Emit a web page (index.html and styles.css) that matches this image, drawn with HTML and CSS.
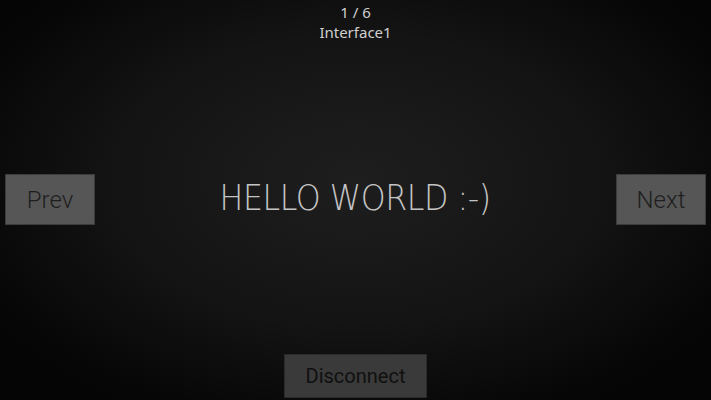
FILE: index.html
```html
<!DOCTYPE html>
<html>
<head>
<meta charset="utf-8">
<link rel="stylesheet" href="styles.css">
</head>
<body>
<div class="screen">
  <header class="header">
    <div class="counter">1 / 6</div>
    <div class="title">Interface1</div>
  </header>
  <main class="middle">
    <button class="btn side">Prev</button>
    <div class="message">HELLO WORLD :-)</div>
    <button class="btn side">Next</button>
  </main>
  <footer class="footer">
    <button class="btn disconnect">Disconnect</button>
  </footer>
</div>
</body>
</html>
```
FILE: styles.css
```css
html, body {
  margin: 0;
  padding: 0;
  background: #000;
}
.screen {
  width: 711px;
  height: 400px;
  display: flex;
  flex-direction: column;
  background: radial-gradient(ellipse 60% 65% at 50% 45%, #1e1e1e 0%, #141414 55%, #050505 100%);
  font-family: "Noto Sans", "DejaVu Sans", sans-serif;
}
.header {
  height: 44px;
  display: flex;
  flex-direction: column;
  align-items: center;
  padding-top: 2px;
  box-sizing: border-box;
  color: #d0d0d0;
  font-size: 15px;
  line-height: 20px;
}
.middle {
  flex: 1;
  display: flex;
  align-items: center;
  justify-content: space-between;
  padding: 0 5px;
}
.btn {
  border: 1px solid #3c3c3c;
  font-family: "Roboto", "Noto Sans", sans-serif;
  font-weight: 300;
  padding: 0;
  cursor: pointer;
}
.side {
  width: 90px;
  height: 51px;
  background: #565656;
  color: #1e1e1e;
  font-size: 24px;
  margin-top: 1px;
}
.message {
  font-family: "DejaVu Sans", sans-serif;
  font-weight: 200;
  font-size: 36px;
  color: #c4c4c4;
  letter-spacing: -0.5px;
  transform: scaleX(0.88);
  margin-top: -4px;
}
.footer {
  display: flex;
  justify-content: center;
  padding-bottom: 2px;
}
.disconnect {
  width: 143px;
  height: 44px;
  background: #3a3a3a;
  border-color: #2a2a2a;
  color: #101010;
  font-size: 20px;
  font-weight: 400;
}
```
